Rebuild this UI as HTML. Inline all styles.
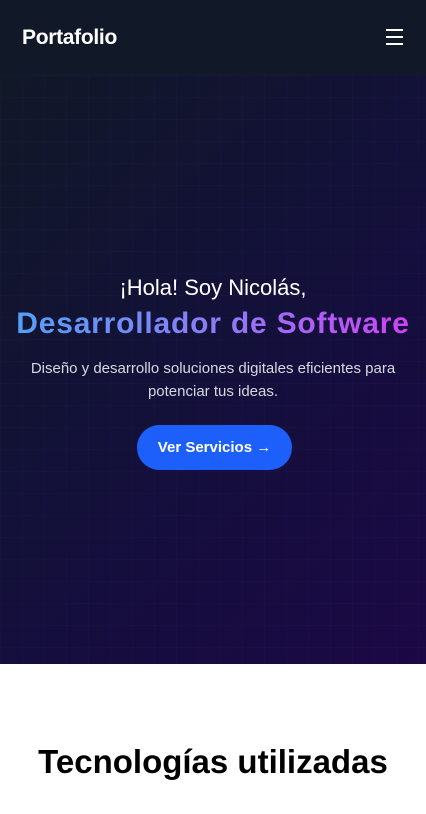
<!DOCTYPE html>
<html><head><meta charset="utf-8"><style>
*{margin:0;padding:0;box-sizing:border-box}
body{width:426px;height:814px;overflow:hidden;font-family:"Liberation Sans","DejaVu Sans",sans-serif;background:#fff}
.nav{height:75px;background:#111827;position:relative}
.logo{position:absolute;left:22px;top:26px;color:#fff;font-weight:bold;font-size:21px;letter-spacing:-0.3px}
.burger{position:absolute;left:386px;top:29px;width:17px}
.burger i{display:block;height:2px;background:#fff;margin-bottom:5px}
.hero{height:589px;position:relative;text-align:center;color:#fff;
background-image:linear-gradient(rgba(90,80,200,.045) 1px,transparent 1px),linear-gradient(90deg,rgba(90,80,200,.045) 1px,transparent 1px),linear-gradient(135deg,#111827 0%,#13103a 50%,#1b0845 100%);background-size:22px 22px,22px 22px,100% 100%}
.h1{position:absolute;top:200px;width:100%;font-size:22px}
.h2{position:absolute;top:232px;left:0;right:0;font-size:30px;font-weight:bold;letter-spacing:0.8px;white-space:nowrap;background:linear-gradient(90deg,#4fa3f7,#8a7df5 50%,#d43ef5);-webkit-background-clip:text;color:transparent}
.p{position:absolute;top:282px;left:20px;right:20px;font-size:15px;line-height:23px;color:#d6d8e0}
.btn{position:absolute;left:137px;top:350px;width:155px;height:45px;border-radius:23px;background:#1d5ffb;color:#fff;font-weight:bold;font-size:15px;line-height:45px}
.t{text-align:center;margin-top:79px;font-size:33px;font-weight:bold;color:#000}
</style></head><body>
<div class="nav"><div class="logo">Portafolio</div><div class="burger"><i></i><i></i><i></i></div></div>
<div class="hero">
<div class="h1">¡Hola! Soy Nicolás,</div>
<div class="h2">Desarrollador de Software</div>
<div class="p">Diseño y desarrollo soluciones digitales eficientes para potenciar tus ideas.</div>
<div class="btn">Ver Servicios →</div>
</div>
<div class="t">Tecnologías utilizadas</div>
</body></html>
